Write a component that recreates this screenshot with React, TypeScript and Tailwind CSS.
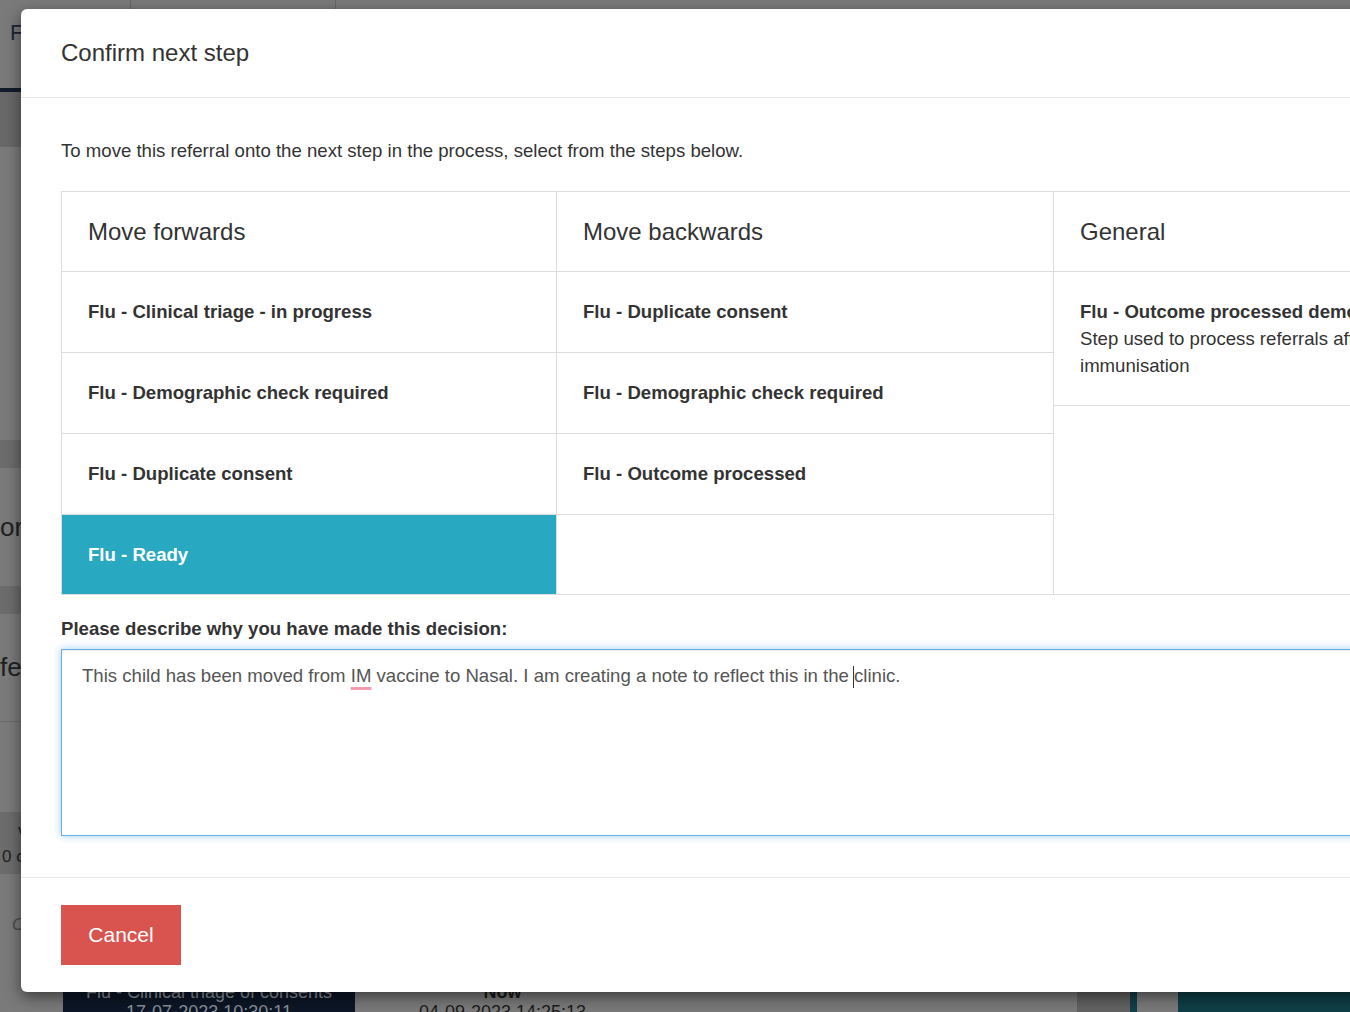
type StepItem = {
  title: string;
  description?: string[];
  selected?: boolean;
};

type StepColumn = {
  heading: string;
  items: StepItem[];
};

const columns: StepColumn[] = [
  {
    heading: 'Move forwards',
    items: [
      { title: 'Flu - Clinical triage - in progress' },
      { title: 'Flu - Demographic check required' },
      { title: 'Flu - Duplicate consent' },
      { title: 'Flu - Ready', selected: true },
    ],
  },
  {
    heading: 'Move backwards',
    items: [
      { title: 'Flu - Duplicate consent' },
      { title: 'Flu - Demographic check required' },
      { title: 'Flu - Outcome processed' },
    ],
  },
  {
    heading: 'General',
    items: [
      {
        title: 'Flu - Outcome processed demographic check',
        description: ['Step used to process referrals after', 'immunisation'],
      },
    ],
  },
];

// the page under the backdrop, already dimmed
function PageBehind() {
  return (
    <div className="absolute inset-0 flex flex-col overflow-hidden bg-[#7a7a7a] text-[#202020]">
      <div className="flex h-[9px] shrink-0">
        <div className="w-[130px]" />
        <div className="w-[205px] border-l border-[#666]" />
        <div className="flex-1 border-l border-[#666]" />
      </div>
      <div className="flex w-[21px] flex-1 flex-col overflow-hidden whitespace-nowrap">
        <div className="h-[79px] pl-[10px] pt-[7px] text-[22px] text-[#1b2538]">F</div>
        <div className="h-[4px] bg-[#121b2c]" />
        <div className="h-[55px] bg-[#686868]" />
        <div className="h-[293px]" />
        <div className="h-[28px] bg-[#6c6c6c]" />
        <div className="flex h-[118px] items-center pl-0 text-[26px]">or</div>
        <div className="h-[28px] bg-[#6c6c6c]" />
        <div className="flex h-[108px] items-center border-b border-[#6a6a6a] text-[26px]">fe</div>
        <div className="h-[90px]" />
        <div className="flex h-[62px] flex-col bg-[#6c6c6c] pl-[2px] pt-[6px] text-[17px] leading-[26px]">
          <span className="pl-[16px]">v</span>
          <span>0 c</span>
        </div>
        <div className="pl-[12px] pt-[38px] text-[17px] italic text-[#4a4a4a]">O</div>
      </div>
      <div className="flex h-[36px] shrink-0 text-[18px] leading-[20px]">
        <div className="w-[63px]" />
        <div className="flex w-[292px] flex-col items-center bg-[#0c1626] pt-[6px] text-[#8a8f98]">
          <span>Flu - Clinical triage of consents</span>
          <span>17-07-2023 10:30:11</span>
        </div>
        <div className="flex w-[295px] flex-col items-center pt-[6px] text-[#1a1a1a]">
          <span className="font-bold">Now</span>
          <span>04-09-2023 14:25:13</span>
        </div>
        <div className="w-[427px]" />
        <div className="w-[53px] bg-[#626262]" />
        <div className="w-[7px] bg-[#123f48]" />
        <div className="w-[41px]" />
        <div className="flex-1 bg-[#0f3e47]" />
      </div>
    </div>
  );
}

function StepsTable() {
  return (
    <div className="grid w-[1490px] grid-cols-[494px_497px_497px] border border-[#ddd]">
      {columns.map((col, ci) => (
        <div key={col.heading} className={ci > 0 ? 'flex flex-col border-l border-[#ddd]' : 'flex flex-col'}>
          <div className="flex h-[80px] items-center border-b border-[#ddd] px-[26px] text-[24px] text-[#333]">
            {col.heading}
          </div>
          {col.items.map((item) =>
            item.selected ? (
              <div key={item.title} className="flex h-[79px] items-center bg-[#29a8c1] px-[26px] text-[18.6px] font-bold text-white">
                {item.title}
              </div>
            ) : item.description ? (
              <div key={item.title} className="whitespace-nowrap border-b border-[#ddd] px-[26px] py-[26px] text-[18.6px] leading-[27px] text-[#333]">
                <div className="font-bold">{item.title}</div>
                {item.description.map((line) => (
                  <div key={line}>{line}</div>
                ))}
              </div>
            ) : (
              <div key={item.title} className="flex h-[81px] items-center border-b border-[#ddd] px-[26px] text-[18.6px] font-bold text-[#333]">
                {item.title}
              </div>
            )
          )}
        </div>
      ))}
    </div>
  );
}

export default function App() {
  return (
    <div className="relative h-[1012px] w-[1350px] overflow-hidden font-['Liberation_Sans',Arial,sans-serif]">
      <PageBehind />
      <div className="absolute left-[21px] top-[9px] w-[1570px] rounded-[6px] bg-white shadow-[0_5px_15px_rgba(0,0,0,0.5)]">
        <div className="flex h-[89px] items-center border-b border-[#e5e5e5] px-10 text-[24px] text-[#333]">
          Confirm next step
        </div>
        <div className="px-10 pb-[41px] pt-10">
          <p className="mb-[27px] text-[18.6px] leading-[26px] text-[#333]">
            To move this referral onto the next step in the process, select from the steps below.
          </p>
          <StepsTable />
          <div className="mb-[7px] mt-[20px] text-[18.6px] font-bold leading-[27px] text-[#333]">
            Please describe why you have made this decision:
          </div>
          <div
            role="textbox"
            className="h-[187px] w-[1490px] border border-[#66afe9] px-5 pt-[12px] text-[18.6px] leading-[27px] text-[#555] shadow-[inset_0_1px_1px_rgba(0,0,0,0.075),0_0_8px_rgba(102,175,233,0.6)]"
          >
            This child has been moved from{' '}
            <span className="underline decoration-[#f59bb0] decoration-[3px] underline-offset-[5px]">IM</span>{' '}
            vaccine to Nasal. I am creating a note to reflect this in the{' '}
            <span className="relative">
              <span className="absolute left-[-1px] top-[1px] h-[22px] w-px bg-[#333]" />
              clinic.
            </span>
          </div>
        </div>
        <div className="border-t border-[#e5e5e5] px-10 pb-[27px] pt-[27px]">
          <button className="h-[60px] w-[120px] bg-[#d9534f] text-[21px] text-white">Cancel</button>
        </div>
      </div>
    </div>
  );
}
